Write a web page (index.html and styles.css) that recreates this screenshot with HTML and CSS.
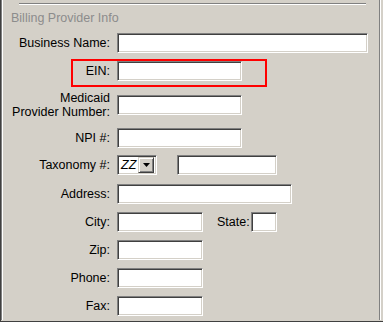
FILE: index.html
```html
<!DOCTYPE html>
<html>
<head>
  <meta charset="UTF-8" />
  <title>Billing Provider Info</title>
  <link rel="stylesheet" href="styles.css">
</head>
<body>
  <div class="panel">
    <div class="group">
      <div class="rule"></div>
      <div class="legend">Billing Provider Info</div>

      <div class="form">
        <div class="row row-first">
          <label class="label">Business Name:</label>
          <input class="field field-xl" type="text" />
        </div>
        <div class="row">
          <label class="label">EIN:</label>
          <input class="field field-md" type="text" />
        </div>
        <div class="row row-medicaid">
          <label class="label label-two">Medicaid<br>Provider Number:</label>
          <input class="field field-md" type="text" />
        </div>
        <div class="row row-npi">
          <label class="label">NPI #:</label>
          <input class="field field-md" type="text" />
        </div>
        <div class="row row-taxonomy">
          <label class="label">Taxonomy #:</label>
          <div class="select">
            <span class="select-value">ZZ</span>
            <span class="select-btn">
              <svg width="7" height="4" viewBox="0 0 7 4"><path d="M0 0h7L3.5 4z" fill="#000"/></svg>
            </span>
          </div>
          <input class="field field-tax" type="text" />
        </div>
        <div class="row row-address">
          <label class="label">Address:</label>
          <input class="field field-lg" type="text" />
        </div>
        <div class="row">
          <label class="label">City:</label>
          <input class="field field-sm" type="text" />
          <label class="label-inline">State:</label>
          <input class="field field-xs" type="text" />
        </div>
        <div class="row">
          <label class="label">Zip:</label>
          <input class="field field-sm" type="text" />
        </div>
        <div class="row">
          <label class="label">Phone:</label>
          <input class="field field-sm" type="text" />
        </div>
        <div class="row">
          <label class="label">Fax:</label>
          <input class="field field-sm" type="text" />
        </div>
      </div>
    </div>

    <div class="highlight"></div>
  </div>
</body>
</html>
```

FILE: styles.css
```css
body {
  margin: 0;
  background-color: #d4d0c8;
  font-family: "Liberation Sans", Arial, sans-serif;
  font-size: 12.5px;
  color: #000;
}

.panel {
  position: relative;
  width: 383px;
  height: 322px;
  box-sizing: border-box;
  border-left: 1px solid #404040;
  border-bottom: 1px solid #404040;
  padding-bottom: 1px;
  overflow: hidden;
}

.group {
  width: 380px;
  height: 100%;
  box-sizing: border-box;
  border-left: 1px solid #808080;
  border-right: 1px solid #ffffff;
  box-shadow: inset 1px 0 0 #ffffff, inset -1px 0 0 #808080;
  padding-top: 3px;
}

.rule {
  height: 1px;
  margin: 0 14px 0 17px;
  background-color: #808080;
  border-bottom: 1px solid #ffffff;
}

.legend {
  margin-top: 6px;
  padding-left: 9px;
  line-height: 15px;
  color: #8c8c8c;
}

.form {
  margin-top: 7px;
}

.row {
  display: flex;
  align-items: center;
  height: 20px;
  margin-top: 8px;
}

.row-first { margin-top: 0; }
.row-medicaid { margin-top: 14px; }
.row-npi { margin-top: 13px; }
.row-taxonomy { margin-top: 7px; }
.row-address { margin-top: 9px; }

.label {
  flex: none;
  width: 108px;
  margin-right: 7px;
  text-align: right;
  line-height: 15px;
}

.label-two {
  line-height: 14px;
}

.label-inline {
  margin-left: 14px;
  margin-right: 1px;
  line-height: 15px;
}

.field {
  height: 20px;
  box-sizing: border-box;
  margin: 0;
  padding: 0 3px;
  background-color: #fff;
  border: 1px solid;
  border-color: #808080 #ffffff #ffffff #808080;
  box-shadow: inset 1px 1px 0 #404040, inset -1px -1px 0 #d4d0c8;
  font: inherit;
  outline: none;
}

.field-xl { width: 251px; }
.field-lg { width: 175px; }
.field-md { width: 125px; }
.field-tax { width: 100px; margin-left: 20px; }
.field-sm { width: 86px; }
.field-xs { width: 26px; }

.select {
  display: flex;
  align-items: center;
  justify-content: space-between;
  width: 40px;
  height: 20px;
  box-sizing: border-box;
  padding: 2px;
  background-color: #fff;
  border: 1px solid;
  border-color: #808080 #ffffff #ffffff #808080;
  box-shadow: inset 1px 1px 0 #404040, inset -1px -1px 0 #d4d0c8;
}

.select-value {
  padding-left: 1px;
  font-style: italic;
  line-height: 14px;
}

.select-btn {
  display: flex;
  align-items: center;
  justify-content: center;
  width: 16px;
  height: 16px;
  box-sizing: border-box;
  background-color: #d4d0c8;
  border: 1px solid;
  border-color: #d4d0c8 #404040 #404040 #d4d0c8;
  box-shadow: inset 1px 1px 0 #ffffff, inset -1px -1px 0 #808080;
}

.highlight {
  position: absolute;
  left: 70px;
  top: 59px;
  width: 196px;
  height: 28px;
  box-sizing: border-box;
  border: 2px solid #ff0000;
}
```
